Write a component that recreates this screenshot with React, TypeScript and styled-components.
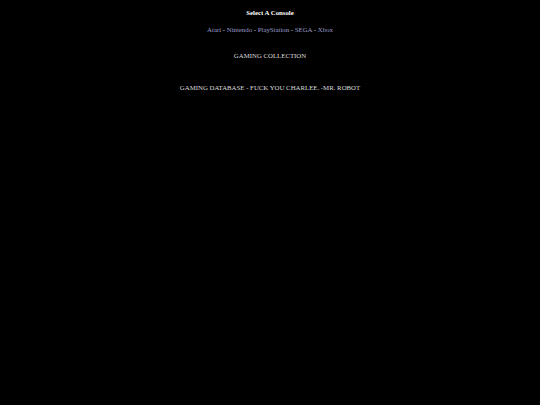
import React from "react";
import styled, { createGlobalStyle } from "styled-components";

const GlobalStyle = createGlobalStyle`
  html, body {
    margin: 0;
    padding: 0;
    background: #000000;
  }
  body {
    font-family: "Liberation Serif", "Times New Roman", serif;
    color: #dddddd;
  }
`;

const Page = styled.div`
  width: 100%;
  min-height: 405px;
  background: #000000;
  display: flex;
  flex-direction: column;
  align-items: center;
  padding-top: 9px;
  box-sizing: border-box;
`;

const Title = styled.div`
  font-weight: 700;
  font-size: 6.8px;
  line-height: 8px;
  color: #ffffff;
`;

const Nav = styled.div`
  margin-top: 9px;
  font-size: 6.8px;
  line-height: 8px;
  color: #dddddd;
`;

const NavLink = styled.a`
  color: #9c9ccc;
  text-decoration: none;
`;

const Line = styled.div<{ $gap: number }>`
  margin-top: ${(p) => p.$gap}px;
  font-size: 6.8px;
  line-height: 8px;
  color: #dddddd;
`;

const consoles = ["Atari", "Nintendo", "PlayStation", "SEGA", "Xbox"];

const App: React.FC = () => {
  return (
    <>
      <GlobalStyle />
      <Page>
        <Title>Select A Console</Title>
        <Nav>
          {consoles.map((name, i) => (
            <React.Fragment key={name}>
              {i > 0 && " - "}
              <NavLink href="#">{name}</NavLink>
            </React.Fragment>
          ))}
        </Nav>
        <Line $gap={18}>GAMING COLLECTION</Line>
        <Line $gap={24}>GAMING DATABASE - FUCK YOU CHARLEE. -MR. ROBOT</Line>
      </Page>
    </>
  );
};

export default App;
